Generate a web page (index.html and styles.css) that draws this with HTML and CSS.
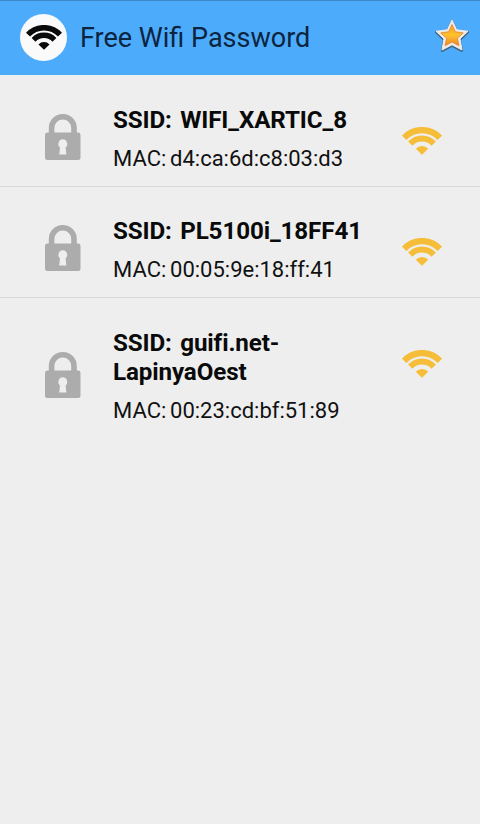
FILE: index.html
```
<!DOCTYPE html>
<html lang="en">
<head>
  <meta charset="UTF-8">
  <meta name="viewport" content="width=device-width, initial-scale=1.0">
  <title>Free Wifi Password</title>
  <link rel="stylesheet" href="styles.css">
</head>
<body>
  <!-- shared icons -->
  <svg class="sprite">
    <symbol id="wifi" viewBox="0 0 40 28">
      <path d="M2.1 10.8 A24.5 24.5 0 0 1 37.9 10.8" fill="none" stroke="currentColor" stroke-width="6.2"/>
      <path d="M8.3 16.6 A16 16 0 0 1 31.7 16.6" fill="none" stroke="currentColor" stroke-width="6"/>
      <path d="M13.8 21.7 A8.5 8.5 0 0 1 26.2 21.7 L20 27.7 Z" fill="currentColor"/>
    </symbol>
    <symbol id="lock" viewBox="0 0 36 46">
      <path d="M6.6 22 V14 A11.2 11.2 0 0 1 29 14 V22" fill="none" stroke="currentColor" stroke-width="5.6"/>
      <path fill-rule="evenodd" fill="currentColor" d="M2.5 18.6 H33 Q35.5 18.6 35.5 21 V43.5 Q35.5 46 33 46 H2.5 Q0 46 0 43.5 V21 Q0 18.6 2.5 18.6 Z M17.8 25.3 A4.6 4.6 0 0 0 15 33.4 L14.2 40.5 H21.4 L20.6 33.4 A4.6 4.6 0 0 0 17.8 25.3 Z"/>
    </symbol>
  </svg>

  <header class="bar">
    <div class="logo"><svg class="logo-icon"><use href="#wifi"/></svg></div>
    <h1 class="title">Free Wifi Password</h1>
    <svg class="star" viewBox="0 0 36 36">
      <defs>
        <linearGradient id="gold" x1="0" y1="0" x2="0" y2="1">
          <stop offset="0" stop-color="#f79a1e"/>
          <stop offset="0.5" stop-color="#fdc32c"/>
          <stop offset="1" stop-color="#f08424"/>
        </linearGradient>
      </defs>
      <path class="star-shadow" d="M18 3 L22.7 12.8 L34 14.3 L26 21.8 L28 33 L18 27.8 L8 33 L10 21.8 L2 14.3 L13.3 12.8 Z"/>
      <path class="star-edge" d="M18 2 L22.7 11.8 L34 13.3 L26 20.8 L28 32 L18 26.8 L8 32 L10 20.8 L2 13.3 L13.3 11.8 Z"/>
      <path class="star-fill" d="M18 6.5 L21.3 13.8 L29.3 14.9 L23.4 20.1 L24.9 27.7 L18 24 L11.1 27.7 L12.6 20.1 L6.7 14.9 L14.7 13.8 Z"/>
    </svg>
  </header>

  <ul class="list">
    <li class="row">
      <svg class="lock"><use href="#lock"/></svg>
      <div class="info">
        <p class="ssid">SSID: WIFI_XARTIC_8</p>
        <p class="mac">MAC: d4:ca:6d:c8:03:d3</p>
      </div>
      <svg class="signal"><use href="#wifi"/></svg>
    </li>
    <li class="row">
      <svg class="lock"><use href="#lock"/></svg>
      <div class="info">
        <p class="ssid">SSID: PL5100i_18FF41</p>
        <p class="mac">MAC: 00:05:9e:18:ff:41</p>
      </div>
      <svg class="signal"><use href="#wifi"/></svg>
    </li>
    <li class="row">
      <svg class="lock"><use href="#lock"/></svg>
      <div class="info">
        <p class="ssid">SSID: guifi.net-LapinyaOest</p>
        <p class="mac">MAC: 00:23:cd:bf:51:89</p>
      </div>
      <svg class="signal"><use href="#wifi"/></svg>
    </li>
  </ul>
</body>
</html>
```
FILE: styles.css
```
* {
  margin: 0;
  padding: 0;
  box-sizing: border-box;
}

body {
  min-height: 100vh;
  background-color: #eeeeee;
  font-family: Roboto, "Liberation Sans", sans-serif;
  color: #111;
}

.sprite {
  display: none;
}

.bar {
  display: flex;
  align-items: center;
  height: 75px;
  padding: 0 10px 0 20px;
  background-color: #4dabfb;
  border-top: 1px solid #3c86c6;
}

.logo {
  display: flex;
  align-items: center;
  justify-content: center;
  width: 47px;
  height: 47px;
  margin-bottom: 2px;
  border-radius: 50%;
  background-color: #fafafa;
}

.logo-icon {
  width: 36px;
  height: 25px;
  color: #0a0a0a;
}

.title {
  flex: 1;
  margin-left: 13px;
  font-size: 27px;
  font-weight: 400;
  color: #0b2440;
}

.star {
  width: 36px;
  height: 36px;
  margin-bottom: 5px;
}

.star-shadow {
  fill: #3f6584;
  stroke: #3f6584;
  stroke-width: 2;
  stroke-linejoin: round;
}

.star-edge {
  fill: #f0ebe6;
  stroke: #f0ebe6;
  stroke-linejoin: round;
}

.star-fill {
  fill: url(#gold);
  stroke: #e08434;
  stroke-width: 0.8;
  stroke-linejoin: round;
}

.list {
  list-style: none;
}

.row {
  display: flex;
  align-items: center;
  padding: 31px 38px 14px 45px;
  border-bottom: 1px solid #d8d8d8;
}

.row + .row {
  padding-top: 30px;
}

.row:last-child {
  padding-top: 31px;
  border-bottom: none;
}

.lock {
  width: 36px;
  height: 46px;
  margin-top: -4px;
  color: #acacac;
}

.info {
  flex: 1;
  margin-left: 32px;
  padding-right: 30px;
}

.ssid {
  font-size: 24.2px;
  font-weight: 700;
  line-height: 29px;
  letter-spacing: -0.12px;
  word-spacing: 2.5px;
  color: #0a0a0a;
}

.mac {
  margin-top: 10px;
  font-size: 22px;
  line-height: 27px;
  word-spacing: -1.7px;
}

.signal {
  align-self: flex-start;
  width: 40px;
  height: 28px;
  margin-top: 21px;
  color: #f5bd38;
}
```
